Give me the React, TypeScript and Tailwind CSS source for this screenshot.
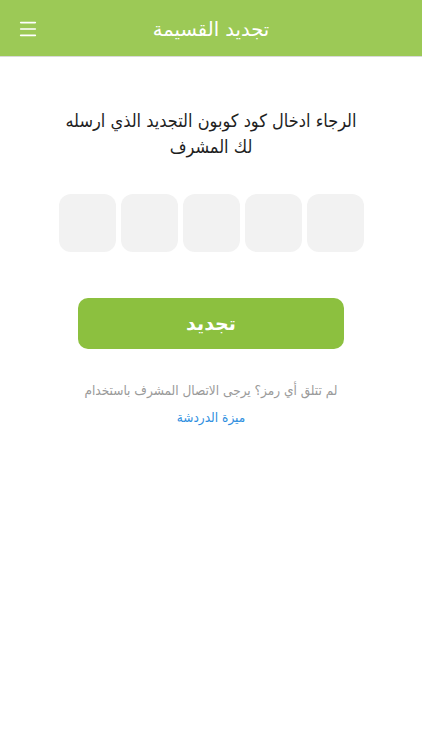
import { Menu } from "lucide-react"

export default function App() {
  const boxes = [0, 1, 2, 3, 4]

  return (
    <div
      dir="rtl"
      className="w-[422px] h-[750px] bg-white flex flex-col"
      style={{ fontFamily: '"DejaVu Sans", "Noto Sans", sans-serif' }}
    >
      {/* HEADER */}
      <header className="relative h-[57px] bg-[#9cc956] border-b border-[#d9d9d9] flex items-center justify-center">
        <button className="absolute left-[17px] top-[18px] text-white">
          <Menu size={22} strokeWidth={1.75} />
        </button>
        <h1 className="text-white text-[19.5px] leading-none mt-[3px]">تجديد القسيمة</h1>
      </header>

      {/* CONTENT */}
      <main
        className="flex flex-col items-center"
        style={{ fontFamily: '"DejaVu Sans Condensed", "DejaVu Sans", sans-serif' }}
      >
        <p className="mt-[51px] w-[302px] text-center text-[#1f1f1f] text-[18px] leading-[26px]">
          الرجاء ادخال كود كوبون التجديد الذي ارسله لك المشرف
        </p>

        {/* CODE BOXES */}
        <div dir="ltr" className="mt-[34px] flex gap-[5px]">
          {boxes.map((b) => (
            <div key={b} className="w-[57px] h-[58px] rounded-[12px] bg-[#f2f2f2]" />
          ))}
        </div>

        <button
          className="mt-[46px] w-[266px] h-[51px] rounded-[10px] bg-[#8cc03f] text-white text-[19px] font-bold"
          style={{ fontFamily: '"DejaVu Sans", sans-serif' }}
        >
          تجديد
        </button>

        <p className="mt-[31px] text-[#9a9a9a] text-[13.5px] leading-[20px] text-center">
          لم تتلق أي رمز؟ يرجى الاتصال المشرف باستخدام
        </p>
        <a className="mt-[7px] text-[#2f8fe0] text-[13.5px] leading-[20px]">ميزة الدردشة</a>
      </main>
    </div>
  )
}
